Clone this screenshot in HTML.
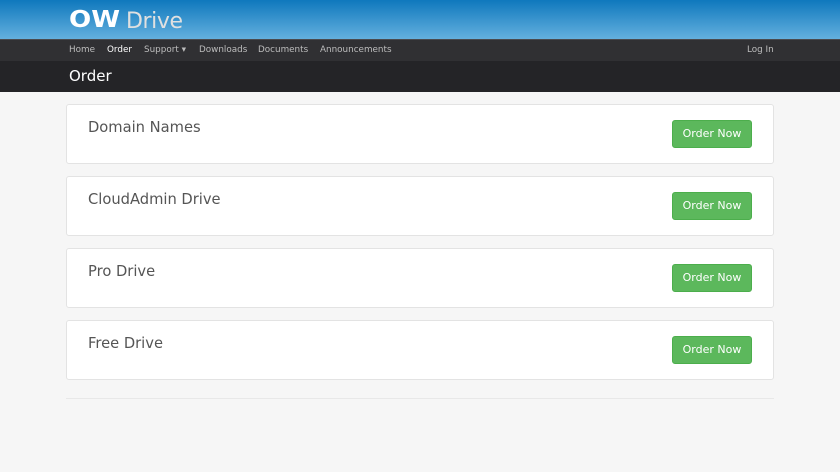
<!DOCTYPE html>
<html><head><style>
*{margin:0;padding:0;box-sizing:border-box}
body{width:840px;height:472px;background:#f6f6f6;font-family:"DejaVu Sans","Liberation Sans",sans-serif;overflow:hidden;position:relative}
.hdr{position:absolute;top:0;left:0;width:840px;height:39px;background:linear-gradient(#0f78bd,#64b0de)}
.nav{position:absolute;top:39px;left:0;width:840px;height:22px;background:#303033;border-top:1px solid #4a4a4e}
.nav span{position:absolute;top:5px;font-size:8.8px;color:#bdbdbd}
.tb{position:absolute;top:61px;left:0;width:840px;height:31px;background:#242427}
.tb span{position:absolute;left:69px;top:6px;font-size:15px;color:#fff}
.card{position:absolute;left:66px;width:708px;height:60px;background:#fff;border:1px solid #e3e3e3;border-radius:3px}
.card .t{position:absolute;left:21px;top:14px;font-size:14.7px;color:#555}
.card .b{position:absolute;left:605px;top:15px;width:80px;height:28px;background:#5cb85c;border:1px solid #4cae4c;border-radius:3px;color:#fff;font-size:11px;text-align:center;line-height:26px}
.hr{position:absolute;left:66px;top:398px;width:708px;height:1px;background:#e8e8e8}
</style></head><body>
<div class="hdr">
<svg width="130" height="30" style="position:absolute;left:68px;top:6px">
<text x="1" y="21" font-family="DejaVu Sans" font-weight="bold" font-size="23" fill="#fff" textLength="51" lengthAdjust="spacingAndGlyphs">OW</text>
<text x="58" y="22" font-family="DejaVu Sans" font-size="22" fill="#e0e0e0" textLength="57">Drive</text>
</svg>
</div>
<div class="nav">
<span style="left:69px">Home</span>
<span style="left:107px;color:#fff">Order</span>
<span style="left:144px">Support ▾</span>
<span style="left:199px">Downloads</span>
<span style="left:258px">Documents</span>
<span style="left:320px">Announcements</span>
<span style="left:747px">Log In</span>
</div>
<div class="tb"><span>Order</span></div>
<div class="card" style="top:104px"><div class="t">Domain Names</div><div class="b">Order Now</div></div>
<div class="card" style="top:176px"><div class="t">CloudAdmin Drive</div><div class="b">Order Now</div></div>
<div class="card" style="top:248px"><div class="t">Pro Drive</div><div class="b">Order Now</div></div>
<div class="card" style="top:320px"><div class="t">Free Drive</div><div class="b">Order Now</div></div>
<div class="hr"></div>
</body></html>
